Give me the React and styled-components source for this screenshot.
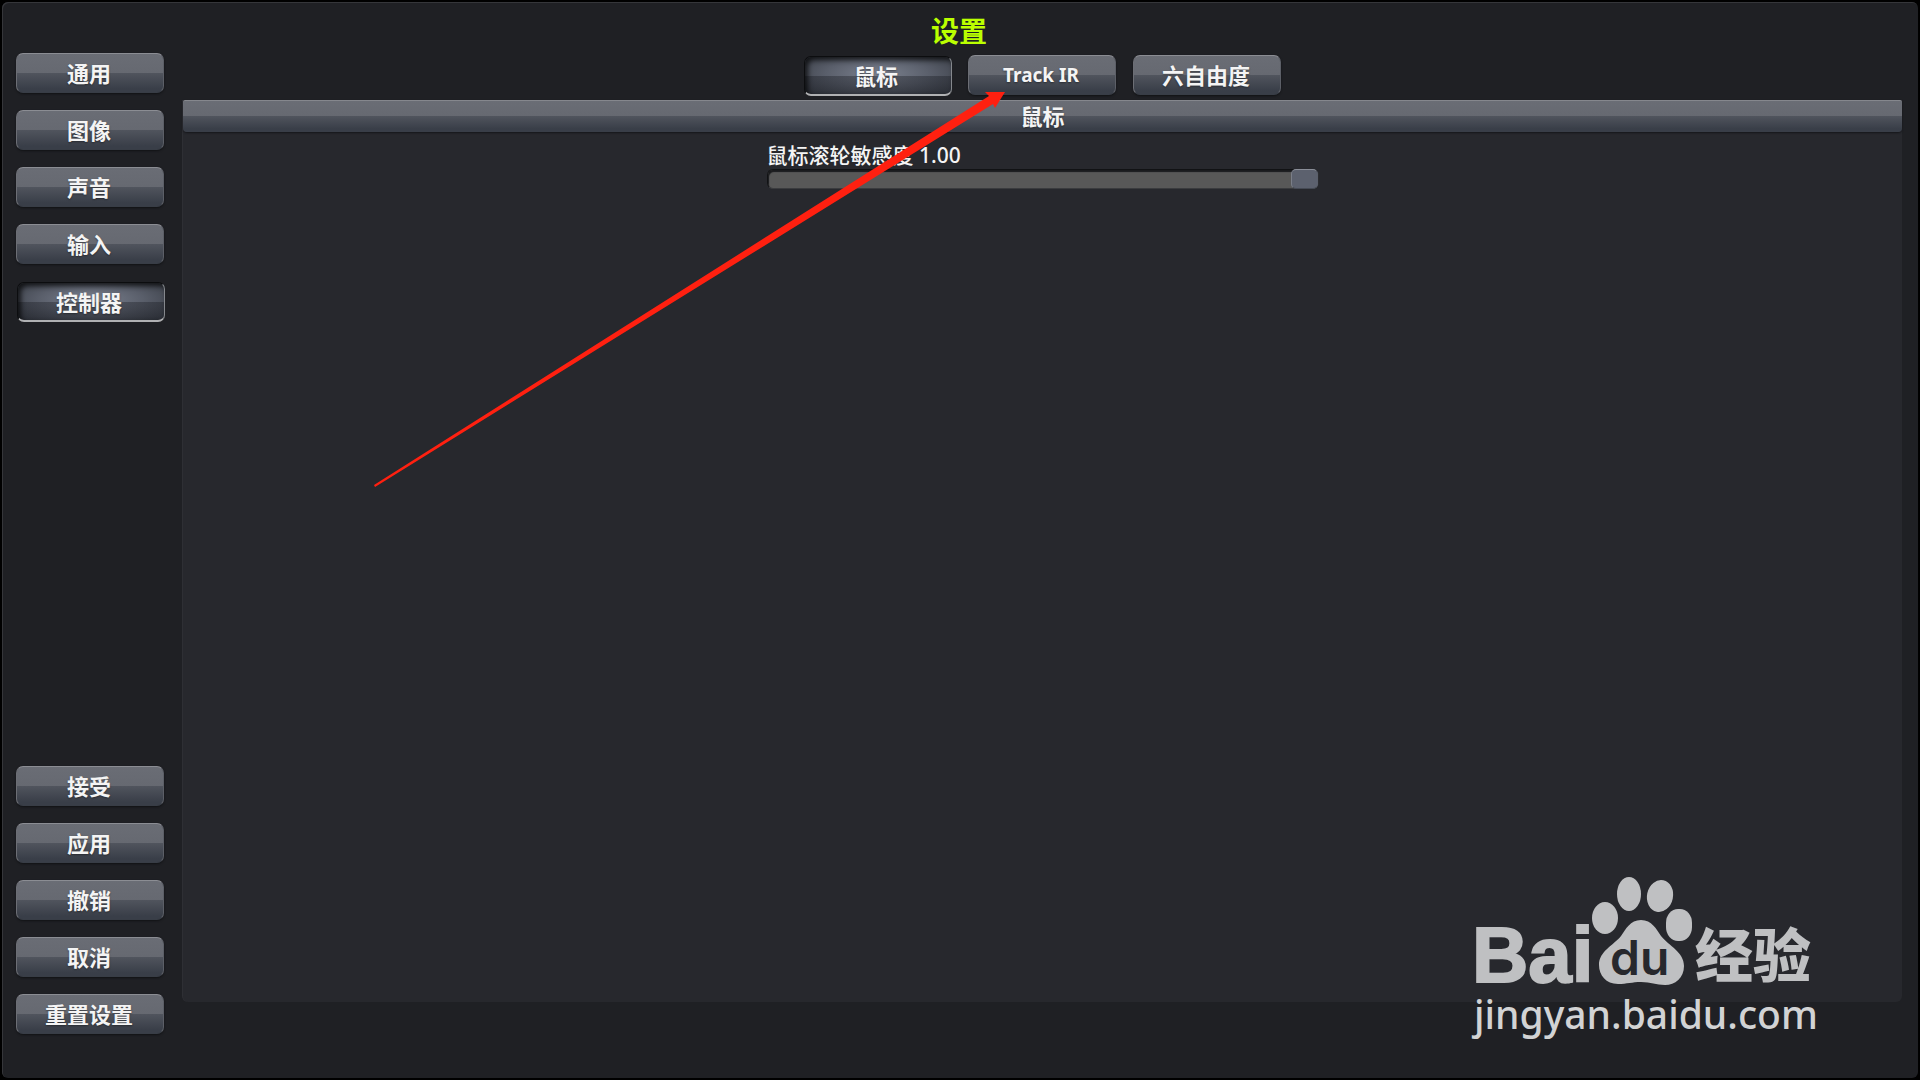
import React, { useState } from "react"
import styled, { createGlobalStyle, css } from "styled-components"

const SECTIONS = ["通用", "图像", "声音", "输入", "控制器"]
const ACTIONS = ["接受", "应用", "撤销", "取消", "重置设置"]
const TABS = [
  { name: "鼠标" },
  { name: "Track IR", latin: true },
  { name: "六自由度" },
]

const App = () => {
  const [section, setSection] = useState("控制器")
  const [tab, setTab] = useState("鼠标")
  const [sensitivity, setSensitivity] = useState(1)

  return (
    <>
      <GlobalStyle />
      <Window>
        <Title>设置</Title>
        <Sidebar>
          <ButtonStack>
            {SECTIONS.map(name => (
              <MenuButton
                key={name}
                $active={name === section}
                onClick={() => setSection(name)}
              >
                {name}
              </MenuButton>
            ))}
          </ButtonStack>
          <ButtonStack>
            {ACTIONS.map(name => (
              <MenuButton key={name}>{name}</MenuButton>
            ))}
          </ButtonStack>
        </Sidebar>
        <Content>
          <TabBar>
            {TABS.map(({ name, latin }) => (
              <MenuButton
                key={name}
                $latin={latin}
                $active={name === tab}
                onClick={() => setTab(name)}
              >
                {name}
              </MenuButton>
            ))}
          </TabBar>
          <Panel>
            <PanelHeader>鼠标</PanelHeader>
            <Setting>
              <SettingLabel htmlFor="wheel">
                鼠标滚轮敏感度 {sensitivity.toFixed(2)}
              </SettingLabel>
              <Slider
                id="wheel"
                type="range"
                min="0"
                max="1"
                step="0.01"
                value={sensitivity}
                onChange={e => setSensitivity(Number(e.target.value))}
              />
            </Setting>
          </Panel>
        </Content>
        <Arrow viewBox="0 0 640 400">
          <path d="M2 397 L617 8 L613 4 L633 4 L623 20 L621 16 L3 399 Z" />
        </Arrow>
        <Watermark>
          <Logo viewBox="0 0 350 110">
            <LogoText x="0" y="105" $size={78} $weight={700} $outline>
              Bai
            </LogoText>
            <ellipse cx="133" cy="41" rx="13" ry="16" />
            <ellipse cx="157" cy="17" rx="12" ry="17" />
            <ellipse cx="188" cy="19" rx="13" ry="16" transform="rotate(12 188 19)" />
            <rect x="194" y="32" width="26" height="32" rx="12" ry="14" />
            <path d="M169 43 C180 43 184 52 189 59 C197 69 212 75 212 89 C212 101 203 108 193 108 C184 108 179 105 169 105 C160 105 155 107 146 107 C134 107 127 98 127 88 C127 74 142 68 149 59 C154 52 158 43 169 43 Z" />
            <LogoText x="138" y="98" $size={48} $weight={600} $dark>
              du
            </LogoText>
            <LogoText x="223" y="100" $size={58} $weight={900}>
              经验
            </LogoText>
          </Logo>
          <Address>jingyan.baidu.com</Address>
        </Watermark>
      </Window>
    </>
  )
}

const GlobalStyle = createGlobalStyle`
  * {
    box-sizing: border-box;
  }

  body {
    margin: 0;
    background: #000;
    color: #f4f4f4;
    font-family: "Noto Sans", "Noto Sans CJK SC", sans-serif;
  }
`

const Window = styled.div`
  display: grid;
  grid-template-columns: 148px 1fr;
  grid-template-rows: 51px 1fr;
  column-gap: 18px;
  position: relative;
  min-height: calc(100vh - 4px);
  margin: 2px;
  padding: 0 16px 44px 14px;
  background: #1f2024;
  border-radius: 6px;
  box-shadow: inset 1px 1px 0 #35363a;
`

const Title = styled.h1`
  grid-column: 1 / -1;
  margin: 0;
  padding-top: 9px;
  color: #bf0;
  font-size: 28px;
  line-height: 40px;
  font-weight: 700;
  text-align: center;
`

const Sidebar = styled.nav`
  display: flex;
  flex-direction: column;
  justify-content: space-between;
`

const ButtonStack = styled.div`
  display: flex;
  flex-direction: column;
  gap: 17px;
`

const pressed = css`
  padding: 0 4px 0 0;
  border-color: #0c0d0f #85888d #b0b1b3 #0c0d0f;
  border-bottom-width: 2px;
  background:
    linear-gradient(rgba(20, 22, 28, 0) 50%, rgba(20, 22, 28, 0.35) 51%),
    radial-gradient(ellipse at 50% 45%, #7c8290 0%, #5a5f6b 50%, #33373f 100%);
  box-shadow: inset 3px 3px 5px rgba(0, 0, 0, 0.7);
  transform: translate(1px, 1px);
`

const MenuButton = styled.button`
  width: 148px;
  height: 40px;
  padding: 0 2px 0 0;
  border: 1px solid;
  border-color: #8b8d93 #5c5f67 #383d46 #6c6e75;
  border-radius: 7px;
  background: linear-gradient(#6a6d75, #666971 50%, #50545d 51%, #393e48 90%) border-box;
  box-shadow: 0 1px 2px #111215;
  color: #f4f4f4;
  font-family: inherit;
  font-size: ${props => (props.$latin ? "19px" : "22px")};
  line-height: 36px;
  font-weight: 700;
  text-align: center;
  text-shadow: 0 1px 2px rgba(0, 0, 0, 0.4);
  ${props => props.$active && pressed}
`

const Content = styled.main`
  display: flex;
  flex-direction: column;
`

const TabBar = styled.div`
  display: flex;
  justify-content: center;
  gap: 17px;
  padding-top: 2px;
`

const Panel = styled.section`
  flex: 1;
  margin: 5px 0 32px;
  background: #27282d;
  border-left: 1px solid #2e2f34;
  border-radius: 0 0 6px 6px;
`

const PanelHeader = styled.h2`
  height: 32px;
  margin: 0;
  border-top: 1px solid #85878d;
  border-radius: 2px 2px 4px 4px;
  background: linear-gradient(#6a6d75, #666971 48%, #50545d 49%, #393e48 90%);
  box-shadow: 0 1px 2px #15161a;
  font-size: 22px;
  line-height: 30px;
  font-weight: 700;
  text-align: center;
  text-shadow: 0 1px 2px rgba(0, 0, 0, 0.4);
`

const Setting = styled.div`
  display: flex;
  flex-direction: column;
  width: 100%;
  max-width: 552px;
  margin: 0 auto;
  padding-top: 10px;
`

const SettingLabel = styled.label`
  font-size: 21px;
  line-height: 27px;
  font-weight: 500;
`

const Slider = styled.input`
  appearance: none;
  width: 100%;
  height: 20px;
  margin: 0;
  border: 1px solid;
  border-color: #111214 #2c2d31 #3a3b3e #111214;
  border-radius: 6px;
  background: #585858;
  box-shadow: inset 1px 2px 1px #1a1b1e;

  &::-webkit-slider-thumb {
    appearance: none;
    width: 27px;
    height: 20px;
    border: 1px solid;
    border-color: #8a8e98 #5b606c #454a54 #7a7e88;
    border-radius: 5px;
    background: #5c616e;
  }
`

const Arrow = styled.svg`
  position: absolute;
  top: 86px;
  left: 370px;
  width: 640px;
  height: 400px;
  fill: #ff2010;
  pointer-events: none;
`

const Watermark = styled.div`
  position: absolute;
  right: 96px;
  bottom: 37px;
  width: 350px;
  color: #bfc0c2;
  pointer-events: none;
`

const Logo = styled.svg`
  display: block;
  width: 350px;
  height: 110px;
  overflow: visible;
  fill: currentColor;
`

const LogoText = styled.text`
  fill: ${props => (props.$dark ? "#27282d" : "currentColor")};
  stroke: ${props => (props.$outline ? "currentColor" : "none")};
  stroke-width: 2px;
  font-family: ${props => (props.$dark ? "Inter" : '"Liberation Sans"')},
    "Noto Sans CJK SC", sans-serif;
  font-size: ${props => props.$size}px;
  font-weight: ${props => props.$weight};
`

const Address = styled.div`
  padding-left: 2px;
  color: #d2d3d4;
  font-size: 39px;
  line-height: 54px;
  font-weight: 500;
`

export default App
